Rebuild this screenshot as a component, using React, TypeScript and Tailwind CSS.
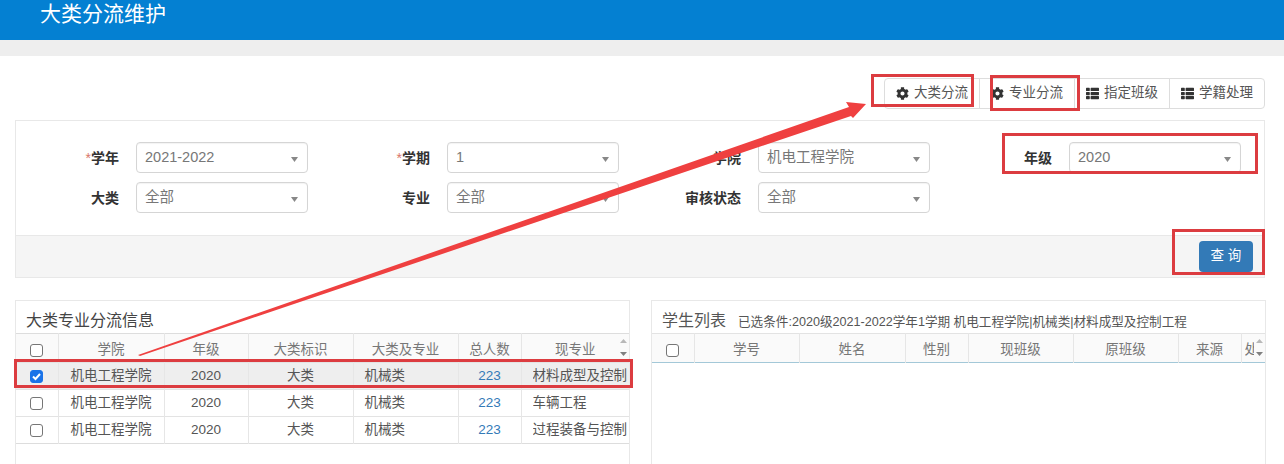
import { FaCog, FaThList } from "react-icons/fa";

const FONT = "font-['Liberation_Sans','Noto_Sans_CJK_SC',sans-serif]";

const leftCols = [42, 106, 84, 105, 105, 63, 108];
const rightCols = [42, 105, 106, 63, 105, 105, 63, 24];

const filters = [
  { label: "学年", required: true, value: "2021-2022" },
  { label: "学期", required: true, value: "1" },
  { label: "学院", required: false, value: "机电工程学院" },
  { label: "年级", required: false, value: "2020" },
  { label: "大类", required: false, value: "全部" },
  { label: "专业", required: false, value: "全部" },
  { label: "审核状态", required: false, value: "全部" },
];

const rows = [
  { major: "材料成型及控制工程", checked: true },
  { major: "车辆工程", checked: false },
  { major: "过程装备与控制工程", checked: false },
];

function ToolButton({ icon, label, first, last }: { icon: "cog" | "list"; label: string; first?: boolean; last?: boolean }) {
  return (
    <button
      className={`flex h-[31px] w-[96px] items-center justify-center gap-[5px] border border-[#dddddd] bg-white text-[13.500px] text-[#555555] ${
        first ? "rounded-l-[4px]" : "-ml-px"
      } ${last ? "rounded-r-[4px]" : ""}`}
    >
      {icon === "cog" ? <FaCog className="size-[13px] text-[#333333]" /> : <FaThList className="size-[13px] text-[#333333]" />}
      {label}
    </button>
  );
}

function Field({ label, required, value }: { label: string; required: boolean; value: string }) {
  return (
    <div className="flex h-[31px] items-center">
      <label className="w-[103px] text-right text-[14px] leading-none font-bold text-[#333333]">
        {required && <span className="font-normal text-[#d9776a]">*</span>}
        {label}
      </label>
      <div className="ml-[17px] flex h-[31px] w-[172px] items-center justify-between rounded-[4px] border border-[#d5d5d5] pr-[9px] pl-[8px] text-[14.5px] text-[#777777] shadow-[inset_0_1px_1px_rgba(0,0,0,0.05)]">
        <span>{value}</span>
        <svg width="7" height="5" viewBox="0 0 7 5" className="mt-[3px]">
          <path d="M0 0h7L3.500 5z" fill="#888888" />
        </svg>
      </div>
    </div>
  );
}

function Check({ checked }: { checked?: boolean }) {
  return (
    <span
      className={`mx-auto flex size-[13px] items-center justify-center rounded-[3px] border ${
        checked ? "border-[#1a73e8] bg-[#1a73e8]" : "border-[#767676] bg-white"
      }`}
    >
      {checked && (
        <svg width="11" height="11" viewBox="0 0 11 11">
          <path d="M2 5.500l2.500 2.500L9 3" fill="none" stroke="#ffffff" strokeWidth="2" />
        </svg>
      )}
    </span>
  );
}

function ColGroup({ cols }: { cols: number[] }) {
  return (
    <colgroup>
      {cols.map((w, i) => (
        <col key={i} style={{ width: w }} />
      ))}
    </colgroup>
  );
}

function ScrollArrows() {
  return (
    <span className="absolute top-[5px] right-[2px] flex flex-col gap-[9px]">
      <svg width="7" height="4" viewBox="0 0 7 4">
        <path d="M3.500 0L7 4H0z" fill="#b8b8b8" />
      </svg>
      <svg width="7" height="4" viewBox="0 0 7 4">
        <path d="M0 0h7L3.500 4z" fill="#808080" />
      </svg>
    </span>
  );
}

function Annotations() {
  const box = "pointer-events-none absolute border-[3px] border-[#dc3c40]";
  return (
    <>
      <div className={`${box} top-[74px] left-[871px] h-[33px] w-[103px]`} />
      <div className={`${box} top-[75px] left-[990px] h-[36px] w-[90px]`} />
      <div className={`${box} top-[133px] left-[1002px] h-[41px] w-[256px]`} />
      <div className={`${box} top-[229px] left-[1172px] h-[46px] w-[93px]`} />
      <div className={`${box} top-[359px] left-[14px] h-[29px] w-[619px]`} />
      <svg className="pointer-events-none absolute top-0 left-0" width="1284" height="464">
        <path d="M138 355L849 107L846 102L866 104L853 118L851 116L140 356Z" fill="#ef4040" />
      </svg>
    </>
  );
}

export default function App() {
  return (
    <div className={`relative h-[464px] w-[1284px] overflow-hidden bg-white ${FONT}`}>
      <header className="h-[40px] bg-[#0480d2] pl-[40px] text-[21px] leading-[27px] text-white">大类分流维护</header>
      <div className="h-[16px] bg-[#eeeeee]" />

      <div className="px-[15px] pt-[22px] pr-[19px]">
        <div className="flex justify-end">
          <ToolButton icon="cog" label="大类分流" first />
          <ToolButton icon="cog" label="专业分流" />
          <ToolButton icon="list" label="指定班级" />
          <ToolButton icon="list" label="学籍处理" last />
        </div>

        <section className="mt-[11px] border border-[#e8e8e8]">
          <div className="grid h-[114px] grid-cols-[repeat(4,311px)] content-start gap-y-[9px] pt-[21px]">
            {filters.map((f) => (
              <Field key={f.label} {...f} />
            ))}
          </div>
          <div className="flex h-[42px] items-center justify-end border-t border-[#e8e8e8] bg-[#f5f5f5] pr-[11px]">
            <button className="h-[31px] w-[54px] rounded-[4px] bg-[#337ab7] text-[13.500px] text-white">查 询</button>
          </div>
        </section>

        <div className="mt-[22px] flex gap-[21px]">
          <section className="h-[172px] w-[615px] border border-[#e8e8e8]">
            <h2 className="h-[32px] pt-[9px] pl-[10px] text-[16px] leading-[22px] text-[#444444]">大类专业分流信息</h2>
            <table className="w-[613px] table-fixed border-y border-[#dddddd] text-[13.500px] text-[#555555]">
              <ColGroup cols={leftCols} />
              <thead>
                <tr className="h-[29px] bg-[#fafafa] text-[#777777]">
                  <th className="border-r border-[#e6e6e6] pt-[4px] font-normal"><Check /></th>
                  <th className="border-r border-[#e6e6e6] pt-[4px] font-normal">学院</th>
                  <th className="border-r border-[#e6e6e6] pt-[4px] font-normal">年级</th>
                  <th className="border-r border-[#e6e6e6] pt-[4px] font-normal">大类标识</th>
                  <th className="border-r border-[#e6e6e6] pt-[4px] font-normal">大类及专业</th>
                  <th className="border-r border-[#e6e6e6] pt-[4px] font-normal">总人数</th>
                  <th className="relative pt-[4px] font-normal">现专业<ScrollArrows /></th>
                </tr>
              </thead>
              <tbody>
                {rows.map((r) => (
                  <tr key={r.major} className={`h-[27px] border-t border-[#e3e3e3] ${r.checked ? "bg-[#eeeeee]" : ""}`}>
                    <td className="border-r border-[#e6e6e6]"><Check checked={r.checked} /></td>
                    <td className="border-r border-[#e6e6e6] text-center">机电工程学院</td>
                    <td className="border-r border-[#e6e6e6] text-center">2020</td>
                    <td className="border-r border-[#e6e6e6] text-center">大类</td>
                    <td className="border-r border-[#e6e6e6] pl-[11px]">机械类</td>
                    <td className="border-r border-[#e6e6e6] text-center text-[#337ab7]">223</td>
                    <td className="pl-[11px]">
                      <div className="w-[94px] overflow-hidden whitespace-nowrap">{r.major}</div>
                    </td>
                  </tr>
                ))}
              </tbody>
            </table>
          </section>

          <section className="h-[172px] w-[615px] border border-[#e8e8e8]">
            <h2 className="flex h-[32px] items-baseline gap-[12px] pt-[9px] pl-[10px] text-[16px] leading-[22px] text-[#555555]">
              学生列表
              <small className="text-[12.600px] text-[#555555]">已选条件:2020级2021-2022学年1学期 机电工程学院|机械类|材料成型及控制工程</small>
            </h2>
            <table className="w-[613px] table-fixed border-b border-b-[#a3c8d8] text-[13.500px] text-[#777777]">
              <ColGroup cols={rightCols} />
              <thead>
                <tr className="h-[29px] border-t border-[#e3e3e3] bg-[#fafafa]">
                  <th className="border-r border-[#e6e6e6] pt-[4px] font-normal"><Check /></th>
                  {["学号", "姓名", "性别", "现班级", "原班级", "来源"].map((h) => (
                    <th key={h} className="border-r border-[#e6e6e6] pt-[4px] font-normal">{h}</th>
                  ))}
                  <th className="relative pt-[4px] pl-[3px] text-left font-normal">
                    <div className="w-[9px] overflow-hidden whitespace-nowrap">处</div>
                    <ScrollArrows />
                  </th>
                </tr>
              </thead>
            </table>
          </section>
        </div>
      </div>

      <Annotations />
    </div>
  );
}
